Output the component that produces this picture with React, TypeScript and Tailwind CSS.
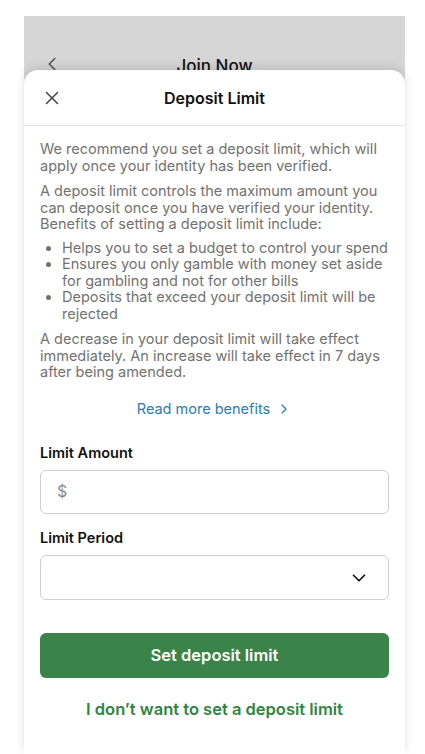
import React from 'react';
import { ChevronLeft, ChevronRight, ChevronDown, X } from 'lucide-react';

const font = { fontFamily: 'Inter, "Liberation Sans", sans-serif' };

export default function App() {
  return (
    <div className="min-h-[754px] w-[425px] bg-white pt-4 px-6" style={font}>
      <div className="w-[381px] bg-[#d6d6d6]">
        {/* Background page header */}
        <div className="relative h-[54px]">
          <ChevronLeft size={22} strokeWidth={1.8} className="absolute left-[17px] top-[37px] text-[#555]" />
          <div className="absolute inset-x-0 top-[38px] text-center text-[17px] font-medium text-[#111]">Join Now</div>
        </div>

        {/* Sheet */}
        <div className="relative rounded-t-[14px] bg-white shadow-[0_-3px_8px_rgba(0,0,0,0.12)] h-[684px]">
          <div className="relative flex h-[56px] items-center justify-center border-b border-[#e3e3e3]">
            <X size={22} strokeWidth={1.6} className="absolute left-[17px] top-[17px] text-[#444]" />
            <span className="text-[16px] font-semibold text-[#111]">Deposit Limit</span>
          </div>

          <div className="px-4 pt-[15px] text-[14.5px] leading-[16.5px] text-[#727272]">
            <p>We recommend you set a deposit limit, which will apply once your identity has been verified.</p>
            <p className="mt-[9px]">
              A deposit limit controls the maximum amount you can deposit once you have verified your identity.
              Benefits of setting a deposit limit include:
            </p>
            <ul className="mt-[7px] list-disc pl-[22px]">
              <li>Helps you to set a budget to control your spend</li>
              <li>Ensures you only gamble with money set aside for gambling and not for other bills</li>
              <li>Deposits that exceed your deposit limit will be rejected</li>
            </ul>
            <p className="mt-[9px]">
              A decrease in your deposit limit will take effect immediately. An increase will take effect in 7 days
              after being amended.
            </p>

            <div className="mt-[20px] flex items-center justify-center gap-[6px] text-[#2b7bba]">
              <span>Read more benefits</span>
              <ChevronRight size={16} strokeWidth={1.8} />
            </div>

            <label className="mt-[28px] block text-[14.5px] font-semibold text-[#111]">Limit Amount</label>
            <div className="mt-[8px] flex h-[44px] items-center rounded-[6px] border border-[#cfcfcf] px-[16px] text-[16px] text-[#8a8a8a]">
              $
            </div>

            <label className="mt-[16px] block text-[14.5px] font-semibold text-[#111]">Limit Period</label>
            <div className="mt-[9px] flex h-[45px] items-center justify-end rounded-[6px] border border-[#cfcfcf] px-[18px]">
              <ChevronDown size={22} strokeWidth={1.8} className="text-[#111]" />
            </div>

            <button className="mt-[33px] flex h-[45px] w-full items-center justify-center rounded-[6px] bg-[#3b8449] text-[16.5px] font-semibold text-white">
              Set deposit limit
            </button>

            <div className="mt-[23px] text-center text-[16.5px] font-semibold text-[#2f8541]">
              I don’t want to set a deposit limit
            </div>
          </div>
        </div>
      </div>
    </div>
  );
}
